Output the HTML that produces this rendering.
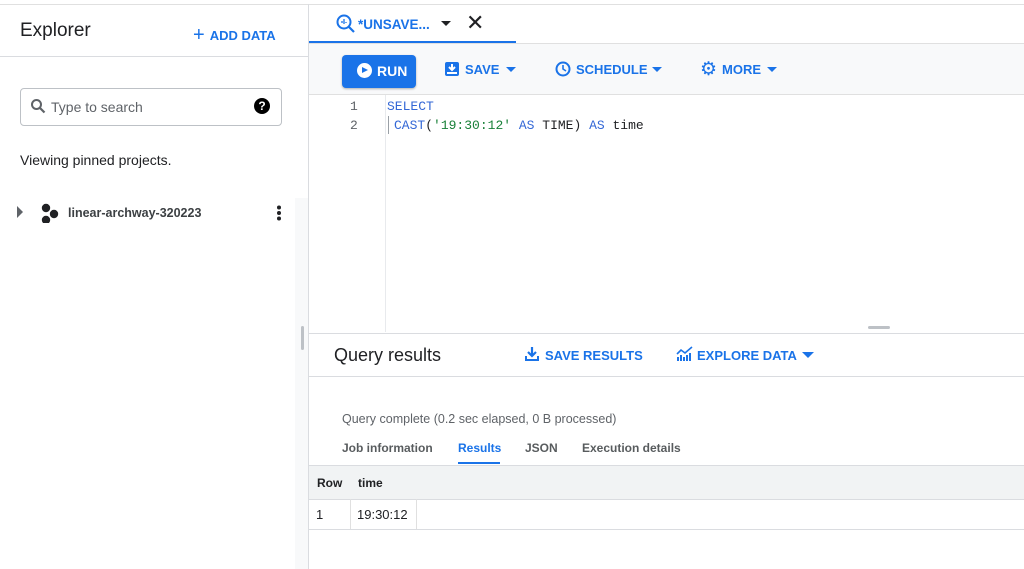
<!DOCTYPE html><html><head><style>
body{margin:0;width:1024px;height:569px;overflow:hidden;font-family:"Liberation Sans",sans-serif;background:#fff;position:relative;color:#202124}
.a{position:absolute}
.blue{color:#1a73e8;font-weight:bold;font-size:13px}
.mono{font-family:"Liberation Mono",monospace;font-size:13px}
.tab{font-size:12px;color:#3c4043;font-weight:bold;opacity:.85}
</style></head><body>
<div class="a" style="left:0;top:4px;width:1024px;height:1px;background:#e0e0e0"></div>
<div class="a" style="left:20px;top:20px;font-size:19px">Explorer</div>
<div class="a blue" style="left:193px;top:23px"><span style="font-size:20px;font-weight:normal;position:relative;top:1px;margin-right:5px">+</span>ADD DATA</div>
<div class="a" style="left:0;top:56px;width:308px;height:1px;background:#dadce0"></div>
<div class="a" style="left:20px;top:88px;width:260px;height:36px;border:1px solid #bdc1c6;border-radius:4px"></div>
<svg class="a" style="left:30px;top:98px" width="16" height="16" viewBox="0 0 16 16"><circle cx="6.5" cy="6.5" r="4.5" fill="none" stroke="#5f6368" stroke-width="2"/><path d="M10 10l4.5 4.5" stroke="#5f6368" stroke-width="2.2"/></svg>
<div class="a" style="left:51px;top:99px;font-size:14px;color:#5f6368">Type to search</div>
<div class="a" style="left:254px;top:98px;width:16px;height:16px;border-radius:50%;background:#000;color:#fff;font-size:12px;font-weight:bold;text-align:center;line-height:16px">?</div>
<div class="a" style="left:20px;top:152px;font-size:14px">Viewing pinned projects.</div>
<div class="a" style="left:295px;top:198px;width:13px;height:371px;background:#f8f9fa"></div>
<div class="a" style="left:17px;top:206px;width:0;height:0;border-top:6px solid transparent;border-bottom:6px solid transparent;border-left:6px solid #5f6368"></div>
<svg class="a" style="left:40px;top:203px" width="20" height="20"><circle cx="6" cy="5" r="4.2" fill="#202124"/><circle cx="14" cy="11" r="4.2" fill="#202124"/><circle cx="6" cy="17" r="4.2" fill="#202124"/></svg>
<div class="a" style="left:68px;top:206px;font-size:12.5px;font-weight:bold;color:#3c4043">linear-archway-320223</div>
<svg class="a" style="left:275px;top:205px" width="8" height="16"><circle cx="4" cy="2.5" r="2" fill="#202124"/><circle cx="4" cy="8" r="2" fill="#202124"/><circle cx="4" cy="13.5" r="2" fill="#202124"/></svg>
<div class="a" style="left:301px;top:326px;width:3px;height:24px;background:#bdc1c6;border-radius:2px"></div>
<div class="a" style="left:308px;top:4px;width:1px;height:565px;background:#dadce0"></div>
<svg class="a" style="left:336px;top:14px" width="20" height="20"><circle cx="8" cy="8" r="6.5" fill="none" stroke="#1a73e8" stroke-width="2"/><path d="M13 13l5 5" stroke="#1a73e8" stroke-width="2.2"/><path d="M6 9v-2M8 10v-5M10 9v-1" stroke="#1a73e8" stroke-width="1.3"/></svg>
<div class="a" style="left:358px;top:17px;font-size:13.5px;color:#1a73e8;font-weight:bold">*UNSAVE...</div>
<div class="a" style="left:441px;top:21px;border-left:5px solid transparent;border-right:5px solid transparent;border-top:5px solid #202124"></div>
<div class="a" style="left:466px;top:10px;font-size:22px">✕</div>
<div class="a" style="left:309px;top:41px;width:207px;height:2px;background:#1a73e8"></div>
<div class="a" style="left:309px;top:43px;width:715px;height:1px;background:#e0e0e0"></div>
<div class="a" style="left:309px;top:44px;width:715px;height:50px;background:#f8f9fa;border-bottom:1px solid #e0e0e0"></div>
<div class="a" style="left:342px;top:55px;width:74px;height:33px;background:#1a73e8;border-radius:4px;box-shadow:0 1px 2px rgba(0,0,0,.3)"></div>
<div class="a" style="left:357px;top:63px;width:15px;height:15px;border-radius:50%;background:#fff"></div>
<div class="a" style="left:362px;top:67px;border-top:3.5px solid transparent;border-bottom:3.5px solid transparent;border-left:6px solid #1a73e8"></div>
<div class="a" style="left:377px;top:63px;color:#fff;font-weight:bold;font-size:14px">RUN</div>
<svg class="a" style="left:444px;top:61px" width="16" height="16"><rect x="1" y="1" width="14" height="14" rx="2" fill="#1a73e8"/><path d="M8 3v6M5 6l3 3 3-3" stroke="#fff" stroke-width="2" fill="none"/><rect x="3" y="11" width="10" height="2" fill="#fff"/></svg>
<div class="a blue" style="left:465px;top:62px">SAVE</div>
<div class="a" style="left:506px;top:67px;border-left:5px solid transparent;border-right:5px solid transparent;border-top:5px solid #1a73e8"></div>
<svg class="a" style="left:555px;top:61px" width="16" height="16"><circle cx="8" cy="8" r="6.5" fill="none" stroke="#1a73e8" stroke-width="2"/><path d="M8 4v4l3 2" stroke="#1a73e8" stroke-width="1.6" fill="none"/></svg>
<div class="a blue" style="left:576px;top:62px">SCHEDULE</div>
<div class="a" style="left:652px;top:67px;border-left:5px solid transparent;border-right:5px solid transparent;border-top:5px solid #1a73e8"></div>
<div class="a" style="left:700px;top:58px;font-size:19px;color:#1a73e8">⚙</div>
<div class="a blue" style="left:722px;top:62px">MORE</div>
<div class="a" style="left:767px;top:67px;border-left:5px solid transparent;border-right:5px solid transparent;border-top:5px solid #1a73e8"></div>
<div class="a" style="left:385px;top:95px;width:1px;height:237px;background:#e8eaed"></div>
<div class="a mono" style="left:350px;top:99px;color:#5f6368">1</div>
<div class="a mono" style="left:350px;top:118px;color:#5f6368">2</div>
<div class="a mono" style="left:387px;top:99px;color:#3367d6">SELECT</div>
<div class="a" style="left:388px;top:116px;width:1px;height:18px;background:#9aa0a6"></div>
<div class="a mono" style="left:394px;top:118px"><span style="color:#3367d6">CAST</span>(<span style="color:#188038">'19:30:12'</span> <span style="color:#3367d6">AS</span> TIME) <span style="color:#3367d6">AS</span> time</div>
<div class="a" style="left:868px;top:326px;width:22px;height:3px;background:#bdc1c6;border-radius:2px"></div>
<div class="a" style="left:309px;top:333px;width:715px;height:1px;background:#dadce0"></div>
<div class="a" style="left:334px;top:345px;font-size:18px">Query results</div>
<svg class="a" style="left:524px;top:346px" width="16" height="16"><path d="M8 1v8M4 6l4 4 4-4" stroke="#1a73e8" stroke-width="2.2" fill="none"/><path d="M2 10v4h12v-4" stroke="#1a73e8" stroke-width="2" fill="none"/></svg>
<div class="a blue" style="left:545px;top:348px">SAVE RESULTS</div>
<svg class="a" style="left:676px;top:346px" width="18" height="16"><path d="M1 8l4-4 4 3 7-6" stroke="#1a73e8" stroke-width="1.6" fill="none"/><path d="M2 15v-4M5 15v-6M8 15v-4M11 15v-6M14 15v-8" stroke="#1a73e8" stroke-width="2"/></svg>
<div class="a blue" style="left:697px;top:348px">EXPLORE DATA</div>
<div class="a" style="left:802px;top:352px;border-left:6px solid transparent;border-right:6px solid transparent;border-top:6px solid #1a73e8"></div>
<div class="a" style="left:309px;top:376px;width:715px;height:1px;background:#dadce0"></div>
<div class="a" style="left:342px;top:412px;font-size:12.5px;color:#5f6368">Query complete (0.2 sec elapsed, 0 B processed)</div>
<div class="a tab" style="left:342px;top:441px">Job information</div>
<div class="a" style="left:458px;top:441px;font-size:12px;color:#1a73e8;font-weight:bold">Results</div>
<div class="a" style="left:458px;top:462px;width:42px;height:2px;background:#1a73e8"></div>
<div class="a tab" style="left:525px;top:441px">JSON</div>
<div class="a tab" style="left:582px;top:441px">Execution details</div>
<div class="a" style="left:309px;top:465px;width:715px;height:33px;background:#f1f3f4;border-top:1px solid #dadce0;border-bottom:1px solid #dadce0"></div>
<div class="a" style="left:317px;top:476px;font-size:12px;font-weight:bold">Row</div>
<div class="a" style="left:358px;top:476px;font-size:12px;font-weight:bold">time</div>
<div class="a" style="left:350px;top:499px;width:1px;height:30px;background:#e0e0e0"></div>
<div class="a" style="left:416px;top:499px;width:1px;height:30px;background:#e0e0e0"></div>
<div class="a" style="left:309px;top:529px;width:715px;height:1px;background:#dadce0"></div>
<div class="a" style="left:316px;top:507px;font-size:13px">1</div>
<div class="a" style="left:357px;top:507px;font-size:13px">19:30:12</div>
</body></html>
